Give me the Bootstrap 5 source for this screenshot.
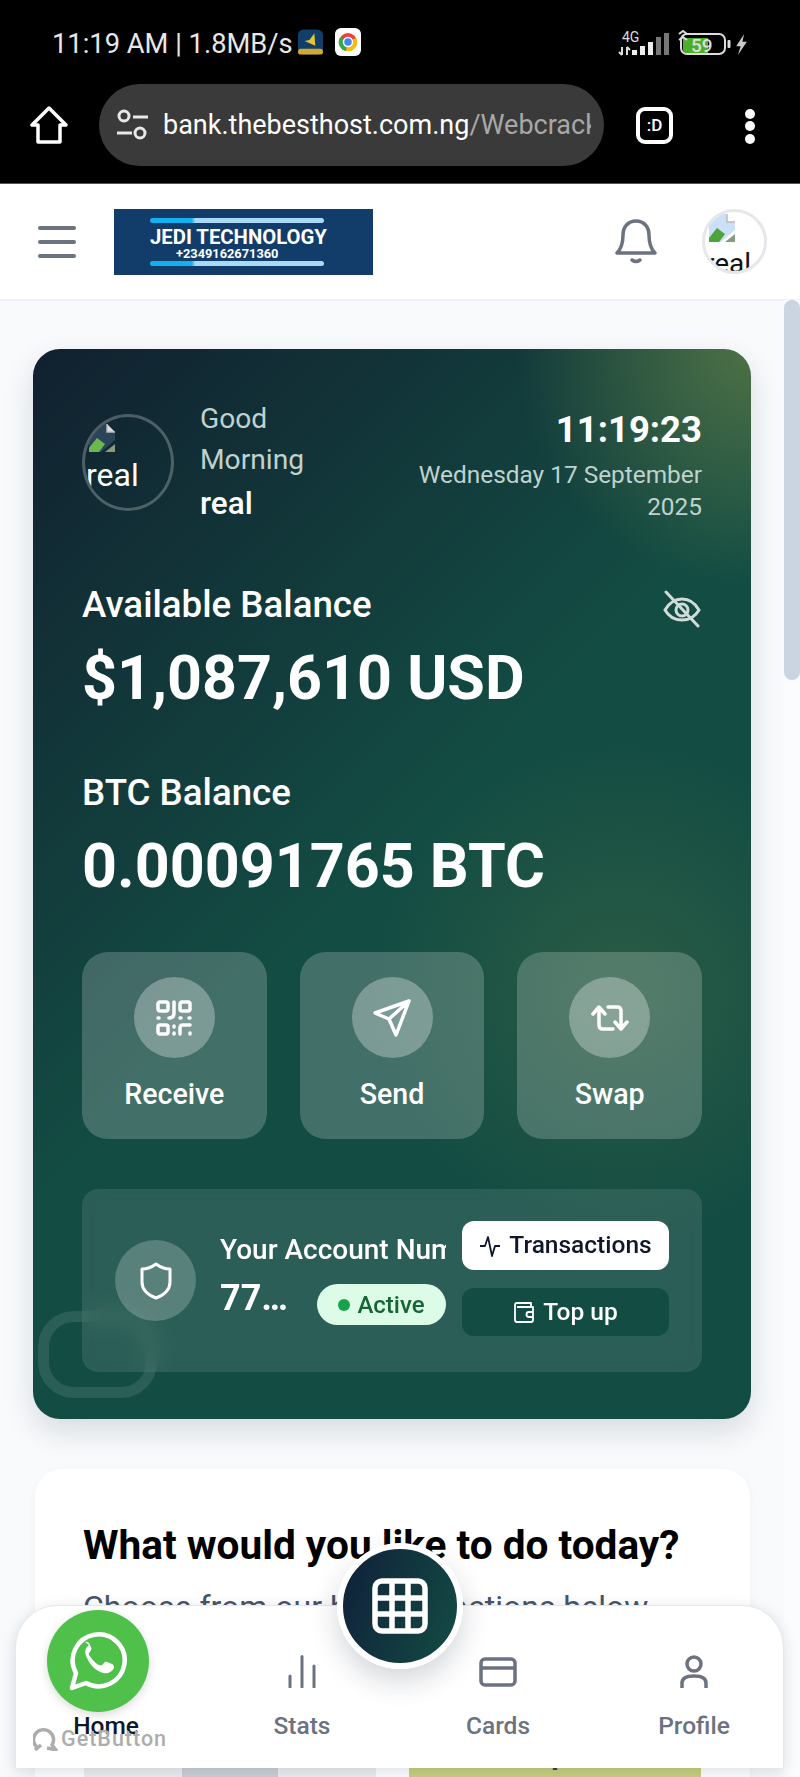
<!DOCTYPE html>
<html lang="en">
<head>
  <meta charset="UTF-8">
  <title>Dashboard</title>
  <meta name="viewport" content="width=device-width, initial-scale=1">
  <link rel="stylesheet" href="https://cdn.jsdelivr.net/npm/bootstrap@5.3.0/dist/css/bootstrap.min.css">
  <style>
    html, body { height: 1777px; overflow: hidden; }
    body { background: #f8fafc; font-family: Roboto, "Liberation Sans", sans-serif; position: relative; }

    /* phone + browser chrome */
    .chrome { height: 184px; background: #000; color: #fff; border-bottom: 1px solid #555; }
    .status-row { height: 84px; padding: 24px 52px 0 52px; font-size: 27.300px; line-height: 40px; color: #e8e8e8; }
    .status-right { margin-top: 4px; }
    .bolt-icon { margin-top: 5px; }
    .chrome-icon { margin-left: 11px; }
    .url-row { height: 82px; padding: 0 45px 0 30px; }
    .url-pill { width: 505px; height: 82px; margin: 0 32px 0 31px; background: #3a3a3a; padding: 0 13px 0 17px; font-size: 27px; white-space: nowrap; overflow: hidden; }
    .url-text { overflow: hidden; margin-left: 15px; }
    .url-rest { color: #a8a8a8; }
    .tab-count { width: 37px; height: 37px; border: 4px solid #fff; border-radius: 9px; font-size: 17px; font-weight: 500; line-height: 29px; text-align: center; }
    .menu-dot { width: 10px; height: 10px; border-radius: 50%; background: #fff; display: block; margin-top: 2.500px; }

    /* site header */
    .top-bar { height: 117px; background: #fff; border-bottom: 2px solid #eef1f5; padding: 0 33px 0 38px; }
    .brand-logo { width: 259px; height: 66px; margin-left: 38px; background: #123d6b; color: #fff; padding: 9px 0 0 36px; font-weight: 700; }
    .brand-name { font-size: 20.300px; line-height: 20px; margin-top: 4px; }
    .brand-phone { font-size: 12.800px; line-height: 13px; margin: 0 0 1px 26px; }
    .saber { height: 5px; width: 174px; border-radius: 3px; background: linear-gradient(90deg, #12b0ee 24%, #a9d9f5 26%); }
    .head-avatar { width: 65px; height: 65px; border: 3px solid #e5e7eb; border-radius: 50%; margin-left: 45px; overflow: hidden; font-size: 28px; line-height: 30px; color: #111; padding-left: 2px; }
    .head-avatar div { margin: 5px 0 0 -2px; }

    /* balance card */
    .page-main { padding: 48px 49px 0 33px; }
    .wallet-card { height: 1070px; border-radius: 27px; color: #fff; padding: 49px 49px 0; position: relative; overflow: hidden;
      background:
        radial-gradient(circle at 100% 0, rgba(100,130,72,.72) 0, rgba(100,130,72,0) 235px),
        radial-gradient(circle at 82% 60%, rgba(72,112,72,.45) 0, rgba(72,112,72,0) 250px),
        linear-gradient(135deg, #11202f 0, #134c43 48%, #134c43 100%);
      box-shadow: 0 12px 30px rgba(15,30,50,.14); }
    .user-avatar { width: 92px; height: 97px; flex: none; border: 3px solid rgba(255,255,255,.25); border-radius: 50%; overflow: hidden; font-size: 32px; line-height: 34px; padding: 5px 0 0 1px; margin-top: 16px; }
    .user-avatar div { margin-top: 4px; }
    .greet { margin-left: 26px; width: 130px; font-size: 28.200px; line-height: 41px; color: #bfd2ce; }
    .greet-name { font-size: 31.500px; font-weight: 500; color: #fff; line-height: 48px; }
    .clock-box { width: 300px; }
    .clock { font-size: 36.500px; font-weight: 700; line-height: 44px; margin-top: 10px; }
    .clock-date { font-size: 24.400px; line-height: 32px; color: #bfd2ce; margin-top: 7px; }
    .bal-label { font-size: 36.700px; font-weight: 500; line-height: 44px; }
    .bal-value { font-size: 61px; font-weight: 700; line-height: 72px; }
    .bal-head { margin-top: 55px; }
    .eye-icon { margin-top: 7px; }
    .bal-usd { margin-top: 14px; }
    .bal-btc-label { margin-top: 57px; }
    .bal-btc { margin-top: 15px; }
    .act-row { gap: 33px; margin-top: 50px; }
    .act-tile { flex: 1 1 0; height: 187px; border-radius: 26px; background: rgba(255,255,255,.2); font-size: 28.600px; font-weight: 500; padding-top: 25px; text-align: center; }
    .icon-disc { width: 81px; height: 81px; border-radius: 50%; background: rgba(255,255,255,.3); }
    .shield-disc { background: rgba(255,255,255,.22); }
    .tile-name { margin-top: 16px; line-height: 40px; }
    .acct-panel { height: 183px; border-radius: 16px; background: rgba(255,255,255,.1); margin-top: 50px; padding: 0 33px; position: relative; z-index: 1; backdrop-filter: blur(10px); }
    .acct-text { width: 226px; margin-left: 24px; padding-bottom: 3px; flex: none; }
    .acct-title { font-size: 28px; font-weight: 500; line-height: 36px; white-space: nowrap; overflow: hidden; margin-bottom: 8px; }
    .acct-line { height: 50px; }
    .acct-num { font-size: 36px; font-weight: 700; line-height: 44px; }
    .state-pill { width: 129px; height: 41px; margin-top: 8px; border-radius: 21px; background: #dcfce7; color: #166534; font-size: 24px; font-weight: 500; }
    .state-dot { width: 12px; height: 12px; border-radius: 50%; background: #16a34a; margin-right: 7px; }
    .acct-actions { padding-bottom: 4px; }
    .acct-btn { width: 207px; height: 49px; margin-left: 16px; border-radius: 12px; font-size: 24.500px; font-weight: 500; border: 0; padding: 0; }
    .btn-tx { background: #fff; color: #0f172a; }
    .btn-top { background: #134c43; color: #fff; margin-top: 18px; height: 48px; }
    .corner-ring { position: absolute; left: 5px; top: 962px; width: 119px; height: 87px; border: 11px solid rgba(255,255,255,.1); border-radius: 36px; }

    /* services card */
    .tasks-card { margin: 50px 1px 0 2px; height: 420px; background: #fff; border-radius: 27px; padding: 48px 48px 0; box-shadow: 0 2px 8px rgba(15,30,50,.04); }
    .tasks-title { font-size: 40.600px; font-weight: 700; line-height: 56px; color: #000; margin: 0; white-space: nowrap; }
    .tasks-sub { font-size: 32px; line-height: 44px; color: #475569; margin: 12px 0 0; white-space: nowrap; }
    .tasks-grid { gap: 33px; margin: 96px 0 0 1px; }
    .task-tile { height: 120px; width: 292px; }
    .task-grey { background: #eceef1; }
    .task-mark { width: 96px; height: 120px; background: #ccd0d6; padding-top: 18px; }
    .task-lime { background: #c8d07e; color: #334155; font-size: 44px; line-height: 44px; padding-top: 8px; text-align: center; }

    /* fixed bits over the page */
    .page-track { position: absolute; top: 300px; bottom: 0; right: 0; width: 16px; background: #fbfcfd; }
    .page-thumb { position: absolute; top: 300px; right: 0; width: 16px; height: 380px; background: #cbd5e1; border-radius: 8px; }
    .bottom-nav { position: absolute; left: 15px; right: 16px; top: 1605px; height: 163px; background: #fff; border: 1px solid #e5e7eb; border-bottom: 0; border-radius: 42px 42px 0 0; z-index: 5; gap: 16px; box-shadow: 0 4px 16px rgba(15,30,50,.14); }
    .nav-cell { width: 180px; flex: none; text-align: center; font-size: 24.500px; font-weight: 500; color: #6b7280; padding-top: 49px; line-height: 30px; }
    .nav-home { color: #0f172a; }
    .nav-icon { height: 33px; margin-bottom: 23px; }
    .fab-grid { position: absolute; left: 337px; top: 1543px; width: 126px; height: 126px; border: 6px solid #fff; border-radius: 50%; background: linear-gradient(110deg, #10203a, #134c43); box-shadow: 0 12px 28px rgba(15,30,50,.18); z-index: 6; }
    .wa-btn { position: absolute; left: 47px; top: 1610px; width: 102px; height: 102px; border-radius: 50%; background: #4fc14a; box-shadow: 0 3px 10px rgba(0,0,0,.15); z-index: 7; }
    .get-button { position: absolute; left: 33px; top: 1725px; z-index: 7; color: #adadad; font-size: 21.500px; font-weight: 500; line-height: 28px; letter-spacing: 1px; }
    .get-button svg { margin-right: 3px; }
  </style>
</head>
<body>
  <!-- phone status bar + browser bar -->
  <div class="chrome">
    <div class="status-row d-flex justify-content-between">
      <div class="d-flex">
        <span>11:19 AM | 1.8MB/s</span>
        <svg class="ms-1 mt-1" width="27" height="28" viewBox="0 0 28 28"><rect x="1" y="1" width="26" height="26" rx="6" fill="#10406a"/><rect x="1" y="21" width="26" height="6" rx="3" fill="#d2a92c"/><path d="M18 5l1 13-11-5 5-1z" fill="#e6c531"/></svg>
        <svg class="chrome-icon mt-1" width="26" height="28" viewBox="0 0 26 28"><rect width="26" height="28" rx="6" fill="#fff"/><circle cx="13" cy="14" r="9" fill="#ea4335"/><path d="M13 14L5 9.500A9 9 0 0 0 11 23z" fill="#34a853"/><path d="M13 14l-2 9A9 9 0 0 0 21 10z" fill="#fbbc05"/><circle cx="13" cy="14" r="4.500" fill="#4285f4" stroke="#fff" stroke-width="1.500"/></svg>
      </div>
      <div class="status-right d-flex align-items-start">
        <svg width="114" height="30" viewBox="0 0 114 30">
          <text x="5" y="14" font-family="Roboto" font-size="14" fill="#ddd">4G</text>
          <path d="M5 19v8M2 24l3 3M10 19v8M13 22l-3-3" stroke="#ddd" stroke-width="2" fill="none"/>
          <rect x="15" y="22" width="5" height="5" fill="#eee"/><rect x="23" y="18" width="5" height="9" fill="#eee"/><rect x="31" y="14" width="5" height="13" fill="#eee"/><rect x="39" y="9" width="5" height="18" fill="#777"/><rect x="47" y="5" width="5" height="22" fill="#777"/>
          <rect x="64" y="6" width="44" height="20" rx="6" fill="none" stroke="#ddd" stroke-width="2"/>
          <path d="M66 10h25v15H70q-4 0-4-4z" fill="#4caf2a"/>
          <text x="74" y="24" font-family="Roboto" font-size="19" font-weight="500" fill="#ddd">59</text>
          <path d="M62 6l4-3 4 3M62 12l4-3 4 3" stroke="#ddd" stroke-width="2" fill="none"/>
          <rect x="110.500" y="12" width="3" height="8" rx="1" fill="#ddd"/>
        </svg>
        <svg class="bolt-icon ms-1" width="13" height="23" viewBox="0 0 14 26"><path d="M10 1L1 15h5l-3 10 10-15H8z" fill="#ccc"/></svg>
      </div>
    </div>
    <div class="url-row d-flex align-items-center">
      <svg width="38" height="38" viewBox="0 0 38 38" fill="none" stroke="#fff" stroke-width="3.500" stroke-linejoin="round"><path d="M19 2L2 19h6v17h22V19h6z"/></svg>
      <div class="url-pill rounded-pill d-flex align-items-center">
        <svg class="flex-shrink-0" width="32" height="32" viewBox="0 0 32 32" fill="none" stroke="#e8e8e8" stroke-width="3"><circle cx="8" cy="7" r="5"/><circle cx="24" cy="24" r="5"/><path d="M17 8h15M1 24h15"/></svg>
        <div class="url-text">bank.thebesthost.com.ng<span class="url-rest">/Webcracker</span></div>
      </div>
      <div class="tab-count">:D</div>
      <div class="ms-auto">
        <span class="menu-dot"></span>
        <span class="menu-dot"></span>
        <span class="menu-dot"></span>
      </div>
    </div>
  </div>

  <!-- site header -->
  <div class="top-bar d-flex align-items-center">
    <svg width="38" height="34" viewBox="0 0 38 34" stroke="#6b7280" stroke-width="4" stroke-linecap="round"><path d="M2 3h34M2 17h34M2 31h34"/></svg>
    <div class="brand-logo">
      <div class="saber"></div>
      <div class="brand-name">JEDI TECHNOLOGY</div>
      <div class="brand-phone">+2349162671360</div>
      <div class="saber"></div>
    </div>
    <svg class="ms-auto" width="42" height="48" viewBox="0 0 42 48" fill="none" stroke="#6b7280" stroke-width="3.500" stroke-linejoin="round" stroke-linecap="round"><path d="M21 3c-8 0-13 6-13 14 0 9-2 14-6 18h38c-4-4-6-9-6-18 0-8-5-14-13-14z"/><path d="M17 42q4 3 8 0"/></svg>
    <div class="head-avatar">
      <svg class="d-block" width="32" height="32" viewBox="0 0 16 16"><path d="M1 1h9l4 4v4l-7 6H1z" fill="#8fb8f0" fill-opacity=".45"/><path d="M10 1v4h4" fill="#fff" stroke="#b8b8b8" stroke-width=".7"/><path d="M1 15v-2l4-5 4 3-3 4z" fill="#4da53a"/><path d="M14 11v4H9z" fill="#8a9a80"/></svg>
      <div>real</div>
    </div>
  </div>

  <!-- main content -->
  <div class="page-main">
    <div class="wallet-card">
      <div class="d-flex">
        <div class="user-avatar">
          <svg class="d-block" width="34" height="32" viewBox="0 0 16 16"><path d="M1 1h9l4 4v4l-7 6H1z" fill="#8fb8f0" fill-opacity=".2"/><path d="M10 1v4h4" fill="#ddd" stroke="#bbb" stroke-width=".7"/><path d="M1 15v-2l4-5 4 3-3 4z" fill="#6cb84f"/><path d="M14 11v4H9z" fill="#8a9a80"/></svg>
          <div>real</div>
        </div>
        <div class="greet">Good Morning<div class="greet-name">real</div></div>
        <div class="clock-box ms-auto text-end">
          <div class="clock">11:19:23</div>
          <div class="clock-date">Wednesday 17 September 2025</div>
        </div>
      </div>

      <div class="bal-head d-flex justify-content-between align-items-start">
        <div class="bal-label">Available Balance</div>
        <svg class="eye-icon" width="40" height="38" viewBox="0 0 40 38" fill="none" stroke="#cfdcd9" stroke-width="3" stroke-linecap="round"><path d="M3 20c4-7 10-11 17-11s13 4 17 11c-4 7-10 10-17 10S7 27 3 20z"/><circle cx="20" cy="20" r="6"/><path d="M4 2l32 34"/></svg>
      </div>
      <div class="bal-value bal-usd">$1,087,610 USD</div>
      <div class="bal-label bal-btc-label">BTC Balance</div>
      <div class="bal-value bal-btc">0.00091765 BTC</div>

      <div class="act-row d-flex">
        <div class="act-tile">
          <div class="icon-disc mx-auto d-flex align-items-center justify-content-center">
            <svg width="36" height="36" viewBox="0 0 36 36" fill="none" stroke="#fff" stroke-width="3.500" stroke-linejoin="round" stroke-linecap="round"><rect x="2" y="2" width="10" height="9" rx="2"/><rect x="24" y="2" width="10" height="9" rx="2"/><rect x="2" y="25" width="10" height="9" rx="2"/><path d="M18 2v11q0 5-5 5M24 18h1M33 18h1M2 18h1M18 26v1M18 33v1M24 34v-6q0-3 3-3h7M34 33v1"/></svg>
          </div>
          <div class="tile-name">Receive</div>
        </div>
        <div class="act-tile">
          <div class="icon-disc mx-auto d-flex align-items-center justify-content-center">
            <svg width="38" height="38" viewBox="0 0 38 38" fill="none" stroke="#fff" stroke-width="3.500" stroke-linejoin="round" stroke-linecap="round"><path d="M36 2L2 14l14 6 7 16zM16 20L36 2"/></svg>
          </div>
          <div class="tile-name">Send</div>
        </div>
        <div class="act-tile">
          <div class="icon-disc mx-auto d-flex align-items-center justify-content-center">
            <svg width="38" height="26" viewBox="0 0 38 26" fill="none" stroke="#fff" stroke-width="3.500" stroke-linejoin="round" stroke-linecap="round"><path d="M2 9l6-7 6 7M8 3v17q0 4 4 4h10M36 17l-6 7-6-7M30 23V6q0-4-4-4H17"/></svg>
          </div>
          <div class="tile-name">Swap</div>
        </div>
      </div>

      <div class="corner-ring"></div>
      <div class="acct-panel d-flex align-items-center">
        <div class="icon-disc shield-disc flex-shrink-0 d-flex align-items-center justify-content-center">
          <svg width="32" height="38" viewBox="0 0 32 38" fill="none" stroke="#fff" stroke-width="3" stroke-linejoin="round"><path d="M16 2C20 5 25 7 30 7V20C30 28 24 33 16 36C8 33 2 28 2 20V7C7 7 12 5 16 2z"/></svg>
        </div>
        <div class="acct-text">
          <div class="acct-title">Your Account Number</div>
          <div class="acct-line d-flex align-items-start justify-content-between">
            <div class="acct-num">77…</div>
            <div class="state-pill d-flex align-items-center justify-content-center"><span class="state-dot"></span>Active</div>
          </div>
        </div>
        <div class="acct-actions">
          <button class="acct-btn btn-tx d-flex align-items-center justify-content-center">
            <svg class="me-2" width="22" height="24" viewBox="0 0 22 24" fill="none" stroke="#0f172a" stroke-width="1.800" stroke-linejoin="round"><path d="M1 12h5l3-9 4 19 3-10h5"/></svg>Transactions
          </button>
          <button class="acct-btn btn-top d-flex align-items-center justify-content-center">
            <svg class="me-2" width="22" height="24" viewBox="0 0 22 24" fill="none" stroke="#fff" stroke-width="1.800" stroke-linejoin="round"><path d="M18 7V3H4Q2 3 2 5v15q0 2 2 2h14q2 0 2-2V7H4"/><path d="M20 12h-4a2.500 2.500 0 0 0 0 5h4"/></svg>Top up
          </button>
        </div>
      </div>
    </div>

    <div class="tasks-card">
      <h2 class="tasks-title">What would you like to do today?</h2>
      <p class="tasks-sub">Choose from our banking actions below</p>
      <div class="tasks-grid d-flex">
        <div class="task-tile task-grey d-flex justify-content-center">
          <div class="task-mark d-flex justify-content-center">
            <svg width="46" height="12" viewBox="0 0 46 12" fill="#334155"><rect width="4" height="12"/><rect x="8" width="4" height="12"/><rect x="17" y="3" width="12" height="3"/><rect x="17" y="9" width="12" height="3"/><rect x="34" width="4" height="12"/><rect x="42" width="4" height="12"/></svg>
          </div>
        </div>
        <div class="task-tile task-lime">Y</div>
      </div>
    </div>
  </div>

  <div class="page-track"></div>
  <div class="page-thumb"></div>

  <!-- bottom menu -->
  <div class="bottom-nav d-flex">
    <div class="nav-cell nav-home"><div class="nav-icon"></div>Home</div>
    <div class="nav-cell">
      <svg class="nav-icon d-block mx-auto" width="28" height="33" viewBox="0 0 28 33" stroke="#6b7280" stroke-width="3" stroke-linecap="round"><path d="M2 32V21M14 32V1.500M26 32V11"/></svg>Stats
    </div>
    <div class="nav-cell">
      <svg class="nav-icon d-block mx-auto" width="38" height="33" viewBox="0 0 38 33" fill="none" stroke="#6b7280" stroke-width="3.500" stroke-linejoin="round"><rect x="2" y="4" width="34" height="26" rx="4"/><path d="M2 13h34"/></svg>Cards
    </div>
    <div class="nav-cell">
      <svg class="nav-icon d-block mx-auto" width="30" height="33" viewBox="0 0 30 33" fill="none" stroke="#6b7280" stroke-width="3.500"><circle cx="15" cy="9" r="7"/><path d="M3 33v-5q0-7 12-7t12 7v5"/></svg>Profile
    </div>
  </div>

  <div class="fab-grid d-flex align-items-center justify-content-center">
    <svg width="56" height="56" viewBox="0 0 56 56" fill="none" stroke="#fff" stroke-width="5.500" stroke-linejoin="round"><rect x="3" y="3" width="50" height="50" rx="7"/><path d="M20 3v50M36 3v50M3 20h50M3 36h50"/></svg>
  </div>

  <div class="wa-btn d-flex align-items-center justify-content-center">
    <svg width="58" height="60" viewBox="0 0 58 60"><path d="M3 57l4-15a26 26 0 1 1 10 10z" fill="none" stroke="#fff" stroke-width="4.500" stroke-linejoin="round"/><path d="M20 14c-4 3-5 7-2 13 3 7 9 13 16 15 5 1 9-1 11-5 0-2 0-3-2-4l-5-2q-2-1-3 1l-2 2q-2 1-5-1-5-4-8-9-1-2 1-3l1-2q1-1 0-3l-2-4q-2-2-4-1z" fill="#fff"/></svg>
  </div>

  <div class="get-button d-flex align-items-center">
    <svg width="25" height="24" viewBox="0 0 25 24" fill="none" stroke="#adadad" stroke-width="3.500" stroke-linejoin="round"><path d="M5 21a10 10 0 1 1 14-3l4 5-9-2"/><path d="M2 23l6-5"/></svg>GetButton
  </div>
</body>
</html>
